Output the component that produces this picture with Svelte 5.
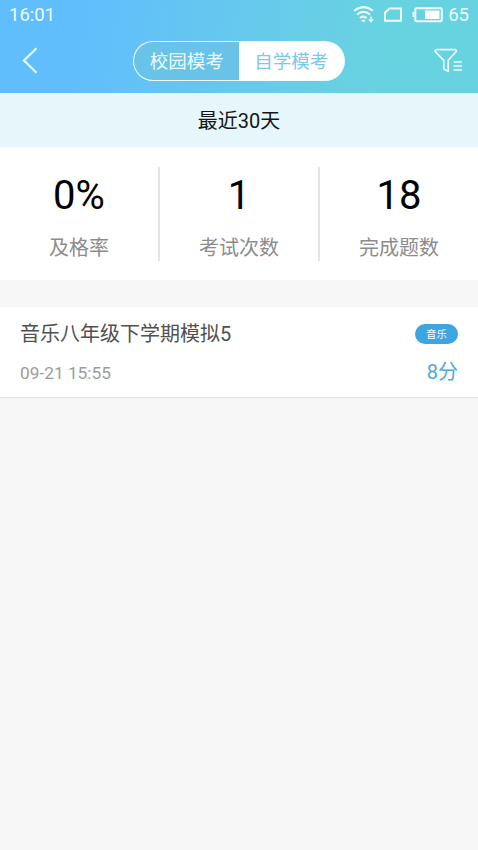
<script>
  const stats = [
    { value: '0%', label: '及格率' },
    { value: '1', label: '考试次数' },
    { value: '18', label: '完成题数' }
  ];
  const exams = [
    { title: '音乐八年级下学期模拟5', date: '09-21 15:55', subject: '音乐', score: '8分' }
  ];
  let active = $state(1);
</script>

<div class="screen">
  <header>
    <div class="status">
      <span class="time">16:01</span>
      <svg class="icons" width="92" height="22" viewBox="352 4 92 22" fill="none" stroke="#effcff" stroke-width="2">
        <path d="M354.200 10.800Q363.500 3.400 372.800 10.800M357 14.500Q363.500 9.300 370 14.500M359.800 18Q363.300 15.200 366.600 18" />
        <path d="M361 20.300L363.400 22.500L365.600 20.300Q363.400 18.700 361 20.300Z" fill="#effcff" stroke="none" />
        <path d="M371 16.500V21M368.900 19.300L371 21.600L373.100 19.300" stroke-width="1.400" />
        <path d="M385 20.800V12.800L389.500 8.500H401V20.800Z" />
        <rect x="415.300" y="8.300" width="26.500" height="13" rx="1.200" />
        <path d="M413.500 12V17" />
        <rect x="425" y="10.500" width="14.500" height="8.500" fill="#fff" stroke="none" />
      </svg>
      <span class="level">65</span>
    </div>
    <nav>
      <button class="back" aria-label="返回">
        <svg width="18" height="28" viewBox="0 0 18 28" fill="none" stroke="#e4fbff" stroke-width="2.200">
          <path d="M15.500 1.200L3 13.500L15.500 25.800" />
        </svg>
      </button>
      <div class="tabs">
        <button class:active={active === 0} onclick={() => (active = 0)}>校园模考</button>
        <button class:active={active === 1} onclick={() => (active = 1)}>自学模考</button>
      </div>
      <button class="filter" aria-label="筛选">
        <svg width="30" height="26" viewBox="434 48 30 26" fill="none" stroke="#e8fcff" stroke-width="1.700" stroke-linejoin="round">
          <path d="M436.500 49.700H455.500Q457 50.200 456 51.700L448.200 60.300V71.500L443.800 69V60.300L435.300 51.700Q434.500 50.200 436.500 49.700Z" />
          <path d="M453.500 62H462M453.500 66H462M453.500 70H462" stroke-width="1.300" />
        </svg>
      </button>
    </nav>
  </header>

  <div class="period">最近30天</div>

  <section class="stats">
    {#each stats as s}
      <div class="stat">
        <span class="value">{s.value}</span>
        <span class="label">{s.label}</span>
      </div>
    {/each}
  </section>

  <section class="list">
    {#each exams as e}
      <article>
        <div class="info">
          <span class="title">{e.title}</span>
          <span class="date">{e.date}</span>
        </div>
        <div class="result">
          <span class="tag">{e.subject}</span>
          <span class="score">{e.score}</span>
        </div>
      </article>
    {/each}
  </section>
</div>

<style>
  .screen {
    min-height: 850px;
    background: #f7f7f7;
    font-family: Roboto, 'Noto Sans CJK SC', sans-serif;
    font-weight: 400;
    color: #151515;
  }
  button {
    border: 0;
    padding: 0;
    background: none;
    font: inherit;
    display: block;
  }
  svg { display: block; }
  header {
    height: 93px;
    background: linear-gradient(100deg, #60befd 17%, #66c9ed 50%, #68d3e0 80%);
    color: #effcff;
  }
  .status {
    height: 30px;
    display: flex;
    align-items: center;
    padding: 0 9px;
    box-sizing: border-box;
    font-size: 18.500px;
  }
  .icons { margin-left: auto; }
  .level { margin-left: 4px; }
  nav {
    height: 62px;
    display: flex;
    align-items: center;
    padding: 0 14px 0 21px;
  }
  .back { width: 29px; }
  .filter { margin-left: auto; }
  .tabs {
    display: flex;
    width: 212px;
    height: 40px;
    box-sizing: border-box;
    padding: 1.400px;
    background: #f0fdff;
    border-radius: 20px;
    margin-left: 83px;
  }
  .tabs button {
    flex: 1;
    font-size: 18.500px;
    line-height: 34px;
    padding-top: 2px;
    color: #e8fbff;
    background: #69c3e8;
  }
  .tabs button:first-child { border-radius: 19px 0 0 19px; }
  .tabs button:last-child { border-radius: 0 19px 19px 0; }
  .tabs button.active {
    background: #fff;
    color: #7cc8e7;
  }
  .period {
    height: 54px;
    line-height: 56px;
    text-align: center;
    font-size: 20px;
    background: #e6f6fb;
  }
  .stats {
    height: 133px;
    display: flex;
    align-items: center;
    background: #fff;
  }
  .stat {
    flex: 1;
    height: 94px;
    display: flex;
    flex-direction: column;
    align-items: center;
    box-sizing: border-box;
  }
  .stat + .stat { border-left: 2px solid #e4e4e4; }
  .value {
    height: 57px;
    line-height: 58px;
    font-size: 40px;
    color: #000;
  }
  .label {
    height: 48px;
    line-height: 48px;
    font-size: 20px;
    color: #8c8c8c;
  }
  .list { padding-top: 27px; }
  article {
    height: 91px;
    box-sizing: border-box;
    padding: 0 20px;
    display: flex;
    justify-content: space-between;
    background: #fff;
    border-bottom: 1px solid #e2e2e2;
  }
  .info, .result {
    display: flex;
    flex-direction: column;
  }
  .info { padding-top: 12px; }
  .result {
    padding-top: 17px;
    align-items: flex-end;
  }
  .title { line-height: 30px; font-size: 20px; color: #505050; }
  .date { line-height: 30px; margin-top: 9px; font-size: 17.300px; color: #9c9c9c; }
  .tag {
    width: 43px;
    height: 20px;
    line-height: 21px;
    border-radius: 10px;
    text-align: center;
    font-size: 10.500px;
    color: #fff;
    background: #3da5df;
  }
  .score { line-height: 28px; margin-top: 14px; font-size: 20px; color: #50a8d7; }
</style>
